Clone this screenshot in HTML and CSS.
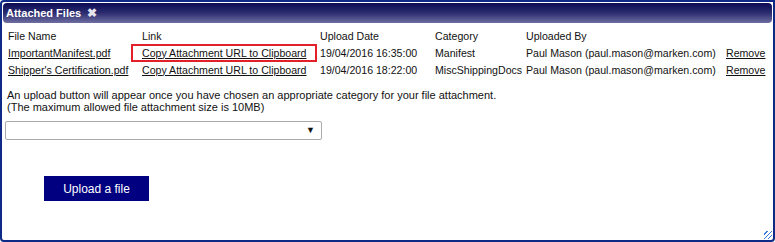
FILE: index.html
```html
<!DOCTYPE html>
<html lang="en">
<head>
    <meta charset="UTF-8">
    <title>Attached Files</title>
    <link rel="stylesheet" href="styles.css">
</head>
<body>
    <div class="dialog">
        <div class="title-bar">
            <span class="title">Attached Files</span>
            <span class="close">&#10006;</span>
        </div>
        <div class="content">
            <table class="files">
                <tr>
                    <th class="col-name">File Name</th>
                    <th class="col-link">Link</th>
                    <th class="col-date">Upload Date</th>
                    <th class="col-cat">Category</th>
                    <th class="col-by">Uploaded By</th>
                    <th class="col-remove"></th>
                </tr>
                <tr>
                    <td><a href="#">ImportantManifest.pdf</a></td>
                    <td><a href="#" class="copy-link highlighted">Copy Attachment URL to Clipboard</a></td>
                    <td>19/04/2016 16:35:00</td>
                    <td>Manifest</td>
                    <td>Paul Mason (paul.mason@marken.com)</td>
                    <td><a href="#">Remove</a></td>
                </tr>
                <tr>
                    <td><a href="#">Shipper's Certification.pdf</a></td>
                    <td><a href="#" class="copy-link">Copy Attachment URL to Clipboard</a></td>
                    <td>19/04/2016 18:22:00</td>
                    <td>MiscShippingDocs</td>
                    <td>Paul Mason (paul.mason@marken.com)</td>
                    <td><a href="#">Remove</a></td>
                </tr>
            </table>

            <p class="note">An upload button will appear once you have chosen an appropriate category for your file attachment.<br>(The maximum allowed file attachment size is 10MB)</p>

            <div class="select-box">
                <span class="arrow">&#9660;</span>
            </div>

            <div class="upload-area">
                <button class="upload-button">Upload a file</button>
            </div>
        </div>
        <span class="grip"></span>
    </div>
</body>
</html>
```

FILE: styles.css
```css
body {
    margin: 0;
    font-family: "Liberation Sans", Arial, sans-serif;
    font-size: 11px;
    color: #111;
    background: #fff;
}

.dialog {
    position: relative;
    width: 775px;
    height: 242px;
    box-sizing: border-box;
    border: 2px solid #0d2b86;
    border-radius: 4px 0 4px 4px;
    padding: 1px;
    background: #fff;
}

.title-bar {
    display: flex;
    align-items: center;
    gap: 6px;
    height: 20px;
    padding: 0 3px;
    border-radius: 4px;
    background: linear-gradient(to bottom, #0b0b55 0%, #2c2c70 50%, #6e6ea2 100%);
    color: #fff;
    font-weight: bold;
    font-size: 11px;
}

.close {
    font-size: 12px;
    color: #e4e4ee;
}

.content {
    padding: 4px 2px 0 2px;
}

.files {
    width: 763px;
    border-collapse: collapse;
    table-layout: fixed;
    font-size: 10.6px;
}

.files th,
.files td {
    box-sizing: border-box;
    padding: 0 3px;
    height: 17px;
    text-align: left;
    white-space: nowrap;
}

.files th {
    font-weight: normal;
}

.files a {
    color: #111;
}

.col-name { width: 134px; }
.col-link { width: 178px; }
.col-date { width: 115px; }
.col-cat { width: 91px; }
.col-by { width: 200px; }
.col-remove { width: 45px; }

.copy-link {
    display: inline-block;
}

.highlighted {
    outline: 2px solid #e3202a;
    outline-offset: 1px;
    padding: 0 8px;
    margin-left: -8px;
}

.note {
    margin: 11px 0 0 2px;
    line-height: 12px;
}

.select-box {
    position: relative;
    width: 315px;
    height: 17px;
    margin: 8px 0 0 0;
    border: 1px solid #aaa;
    border-radius: 2px;
    background: #fff;
}

.arrow {
    position: absolute;
    right: 6px;
    top: 3px;
    font-size: 9px;
    color: #111;
}

.upload-area {
    padding: 36px 0 0 39px;
}

.upload-button {
    width: 105px;
    height: 25px;
    border: none;
    background: #000080;
    color: #fff;
    font-family: "Liberation Sans", Arial, sans-serif;
    font-size: 12px;
}

.grip {
    position: absolute;
    right: 1px;
    bottom: 1px;
    width: 8px;
    height: 8px;
    background: repeating-linear-gradient(135deg, transparent 0 2px, #3a7be0 2px 3px);
}
```
